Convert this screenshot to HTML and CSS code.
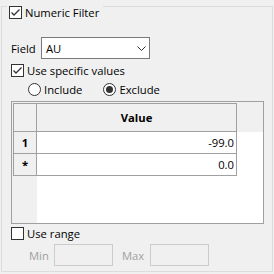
FILE: index.html
```html
<!doctype html>
<html lang="en">
 <head>
  <meta charset="UTF-8">
  <title>Numeric Filter</title>
  <link rel="stylesheet" href="styles.css">
 </head>
 <body>
  <div class="group">
   <div class="legend">
    <span class="check"><svg viewBox="0 0 11 11" width="11" height="11"><path d="M1.5 5.5 L4 8 L9.5 2.5" /></svg></span>
    <span class="label">Numeric Filter</span>
   </div>

   <div class="field-row">
    <span class="field-label">Field</span>
    <div class="combo">
     <span>AU</span>
     <svg class="chev" viewBox="0 0 9 5" width="9" height="5"><path d="M0.5 0.5 L4.5 4.5 L8.5 0.5" /></svg>
    </div>
   </div>

   <div class="check-row specific">
    <span class="check"><svg viewBox="0 0 11 11" width="11" height="11"><path d="M1.5 5.5 L4 8 L9.5 2.5" /></svg></span>
    <span class="label">Use specific values</span>
   </div>

   <div class="radio-row">
    <span class="radio"></span><span class="label">Include</span>
    <span class="radio on"></span><span class="label">Exclude</span>
   </div>

   <div class="grid">
    <table>
     <colgroup><col class="c-head"><col class="c-value"></colgroup>
     <tr class="head-row"><th></th><th>Value</th></tr>
     <tr><th>1</th><td>-99.0</td></tr>
     <tr><th>*</th><td>0.0</td></tr>
    </table>
   </div>

   <div class="check-row range">
    <span class="check empty"></span>
    <span class="label">Use range</span>
   </div>

   <div class="minmax">
    <span class="dim min">Min</span>
    <span class="box"></span>
    <span class="dim max">Max</span>
    <span class="box"></span>
   </div>
  </div>
 </body>
</html>
```

FILE: styles.css
```css
* {
  box-sizing: border-box;
}
body {
  margin: 0;
  width: 274px;
  height: 274px;
  background: #f0f0f0;
  font-family: "Open Sans", sans-serif;
  font-size: 11.25px;
  color: #000;
}
.group {
  margin: 6px 0 0 1px;
  width: 272px;
  height: 266px;
  border: 1px solid #dcdcdc;
  padding-left: 9px;
}
.legend {
  display: flex;
  width: max-content;
  align-items: center;
  height: 13px;
  margin: -1px 0 0 -4px;
  padding: 0 4px 0 2px;
  background: #f0f0f0;
}
.check {
  width: 13px;
  height: 13px;
  border: 1px solid #333;
  background: #fff;
  display: inline-flex;
  align-items: center;
  justify-content: center;
  flex: none;
}
.check path {
  fill: none;
  stroke: #333;
  stroke-width: 1.3;
}
.label {
  margin-left: 3px;
  line-height: 13px;
  white-space: nowrap;
}
.field-row {
  display: flex;
  align-items: center;
  margin-top: 18px;
  height: 22px;
}
.field-label {
  width: 30px;
}
.combo {
  width: 109px;
  height: 22px;
  border: 1px solid #7a7a7a;
  background: #fff;
  display: flex;
  align-items: center;
  justify-content: space-between;
  padding: 0 3px 0 4px;
}
.chev path {
  fill: none;
  stroke: #333;
  stroke-width: 1;
}
.check-row {
  display: flex;
  align-items: center;
  height: 13px;
}
.specific {
  margin-top: 5px;
}
.radio-row {
  display: flex;
  align-items: center;
  height: 13px;
  margin-top: 6px;
  padding-left: 17px;
}
.radio {
  width: 13px;
  height: 13px;
  border: 1px solid #333;
  border-radius: 50%;
  background: #fff;
  display: inline-flex;
  align-items: center;
  justify-content: center;
}
.radio.on {
  margin-left: 21px;
}
.radio.on::after {
  content: "";
  width: 7px;
  height: 7px;
  border-radius: 50%;
  background: #333;
}
.grid {
  margin-top: 5px;
  width: 253px;
  height: 123px;
  border: 1px solid #a0a0a0;
  padding: 1px 0 0 1px;
  background:
    linear-gradient(#f0f0f0, #f0f0f0) 0 0 / 25px 100% no-repeat,
    linear-gradient(#f0f0f0, #f0f0f0) 0 0 / 100% 30px no-repeat,
    #fff;
}
table {
  border-collapse: separate;
  border-spacing: 0;
  table-layout: fixed;
  width: 224px;
  border-top: 1px solid #a0a0a0;
  border-left: 1px solid #a0a0a0;
}
.c-head {
  width: 23px;
}
.c-value {
  width: 200px;
}
th, td {
  border-right: 1px solid #a0a0a0;
  border-bottom: 1px solid #a0a0a0;
  padding: 0;
  height: 22px;
  line-height: 20px;
}
th {
  background: #f0f0f0;
  font-weight: bold;
  text-align: center;
}
.head-row th {
  height: 28px;
}
td {
  background: #fff;
  text-align: right;
  padding-right: 2px;
}
.range {
  margin-top: 3px;
}
.minmax {
  display: flex;
  align-items: center;
  margin-top: 4px;
  height: 22px;
  padding-left: 18px;
}
.dim {
  color: #a0a0a0;
}
.min {
  width: 25px;
}
.max {
  width: 28px;
  margin-left: 9px;
}
.box {
  width: 59px;
  height: 22px;
  border: 1px solid #cccccc;
  background: #f0f0f0;
}
```
